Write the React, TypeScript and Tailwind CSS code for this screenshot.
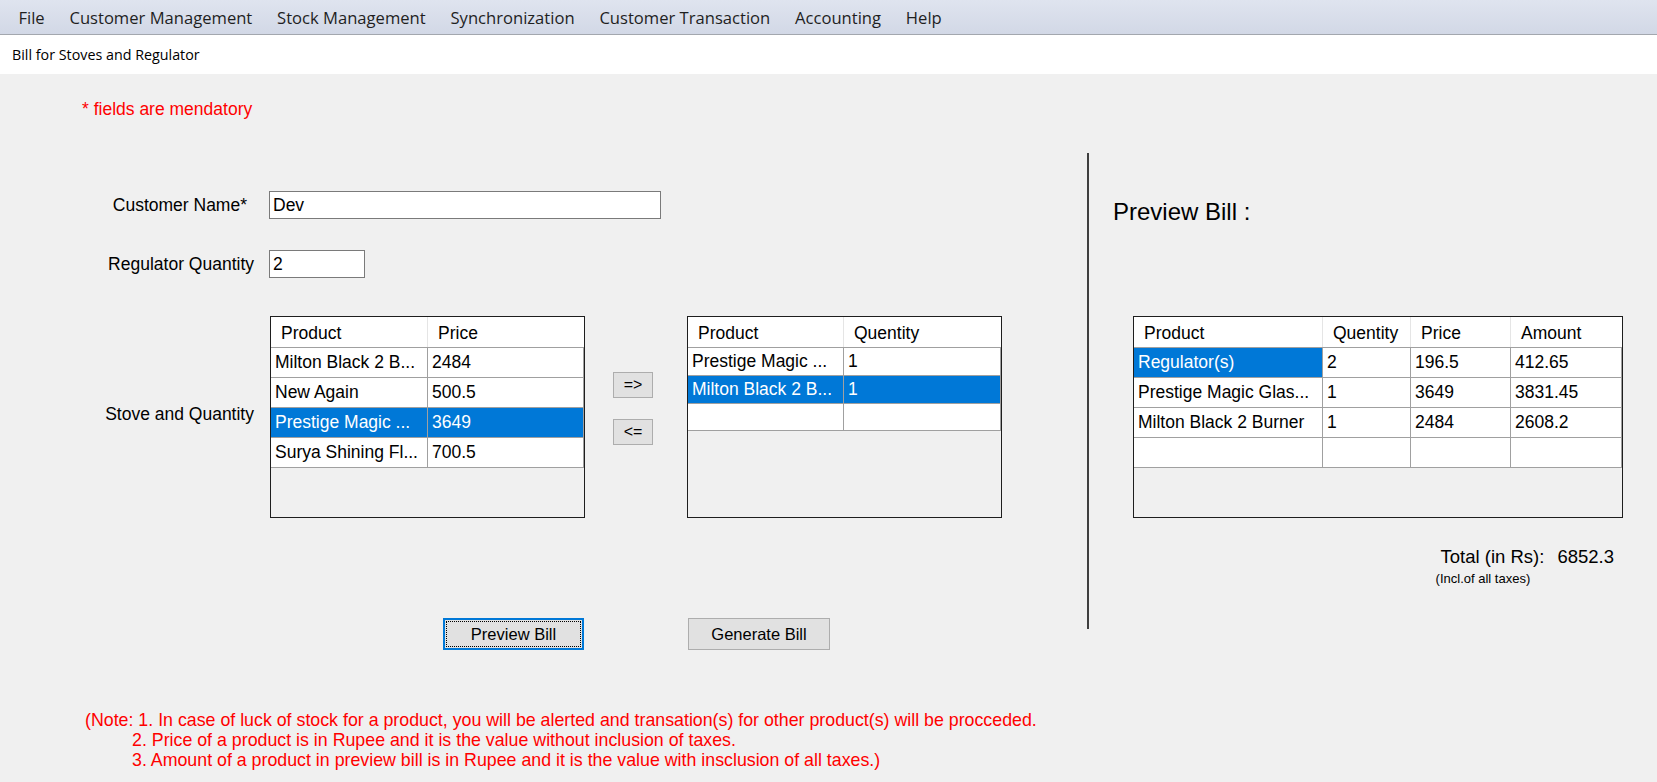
import React from 'react';

type Col = { label: string; w: string };
type Cell = { text: string; sel?: boolean };

const menus = ['File', 'Customer Management', 'Stock Management', 'Synchronization', 'Customer Transaction', 'Accounting', 'Help'];

function DataGrid({ cols, rows, rowH, width }: { cols: Col[]; rows: Cell[][]; rowH: string[]; width: string }) {
  return (
    <div className={`${width} h-[202px] border border-[#1e1e1e] bg-[#f0f0f0] flex flex-col shrink-0`}>
      <div className="flex h-[31px] bg-white border-b border-[#a0a0a0]">
        {cols.map((c, i) => (
          <div key={i} className={`${c.w} h-full pl-[10px] pt-[2px] flex items-center border-r border-[#e5e5e5] last:border-r-0`}>
            {c.label}
          </div>
        ))}
      </div>
      {rows.map((r, ri) => (
        <div key={ri} className={`flex ${rowH[ri]} border-b border-[#a0a0a0]`}>
          {r.map((cell, ci) => (
            <div
              key={ci}
              className={`${cols[ci].w} h-full pl-[4px] pr-[2px] flex items-center whitespace-nowrap overflow-hidden border-r border-[#a0a0a0] ${
                cell.sel ? 'bg-[#0078d7] text-white' : 'bg-white'
              }`}
            >
              {cell.text}
            </div>
          ))}
        </div>
      ))}
    </div>
  );
}

export default function App() {
  const stockCols: Col[] = [
    { label: 'Product', w: 'w-[157px]' },
    { label: 'Price', w: 'w-[156px]' },
  ];
  const stockRows: Cell[][] = [
    [{ text: 'Milton Black 2 B...' }, { text: '2484' }],
    [{ text: 'New Again' }, { text: '500.5' }],
    [{ text: 'Prestige Magic ...', sel: true }, { text: '3649', sel: true }],
    [{ text: 'Surya Shining Fl...' }, { text: '700.5' }],
  ];
  const cartCols: Col[] = [
    { label: 'Product', w: 'w-[156px]' },
    { label: 'Quentity', w: 'w-[157px]' },
  ];
  const cartRows: Cell[][] = [
    [{ text: 'Prestige Magic ...' }, { text: '1' }],
    [{ text: 'Milton Black 2 B...', sel: true }, { text: '1', sel: true }],
    [{ text: '' }, { text: '' }],
  ];
  const billCols: Col[] = [
    { label: 'Product', w: 'w-[189px]' },
    { label: 'Quentity', w: 'w-[88px]' },
    { label: 'Price', w: 'w-[100px]' },
    { label: 'Amount', w: 'w-[111px]' },
  ];
  const billRows: Cell[][] = [
    [{ text: 'Regulator(s)', sel: true }, { text: '2' }, { text: '196.5' }, { text: '412.65' }],
    [{ text: 'Prestige Magic Glas...' }, { text: '1' }, { text: '3649' }, { text: '3831.45' }],
    [{ text: 'Milton Black 2 Burner' }, { text: '1' }, { text: '2484' }, { text: '2608.2' }],
    [{ text: '' }, { text: '' }, { text: '' }, { text: '' }],
  ];

  return (
    <div className="h-[782px] w-full overflow-hidden bg-[#f0f0f0] text-black font-['Liberation_Sans',Arial,sans-serif] text-[17.5px]">
      {/* menu */}
      <div className="h-[35px] pt-[2px] flex items-center pl-[6px] bg-gradient-to-b from-[#dfe4ef] to-[#d2d8e6] border-b border-[#a3a7ae] font-['Open_Sans',sans-serif] text-[16.6px] text-[#1f1f1f]">
        {menus.map((m) => (
          <div key={m} className="px-[12.4px]">{m}</div>
        ))}
      </div>
      <div className="h-[39px] bg-white flex items-center pl-[12px] font-['Open_Sans',sans-serif] text-[14.3px]">
        Bill for Stoves and Regulator
      </div>

      <div className="pt-[25px] pl-[82px] h-[20px] leading-[20px] text-[#ff0000] box-content">* fields are mendatory</div>

      <div className="flex mt-[34px]">
        {/* left side */}
        <div className="w-[1087px] shrink-0 flex flex-col">
          <div className="flex items-center mt-[38px]">
            <div className="w-[247px] text-right">Customer Name*</div>
            <div className="ml-[22px] w-[392px] h-[28px] bg-white border border-[#7a7a7a] flex items-center pl-[3px]">Dev</div>
          </div>
          <div className="flex items-center mt-[31px]">
            <div className="w-[254px] text-right">Regulator Quantity</div>
            <div className="ml-[15px] w-[96px] h-[28px] bg-white border border-[#7a7a7a] flex items-center pl-[3px]">2</div>
          </div>
          <div className="flex items-center mt-[38px]">
            <div className="w-[254px] text-right mt-[-6px]">Stove and Quantity</div>
            <div className="ml-[16px]">
              <DataGrid width="w-[315px]" cols={stockCols} rows={stockRows} rowH={['h-[30px]', 'h-[30px]', 'h-[30px]', 'h-[30px]']} />
            </div>
            <div className="ml-[28px] flex flex-col gap-[21px] -mt-[18px] text-[16px]">
              <button className="w-[40px] h-[26px] bg-[#e1e1e1] border border-[#adadad] flex items-center justify-center">=&gt;</button>
              <button className="w-[40px] h-[26px] bg-[#e1e1e1] border border-[#adadad] flex items-center justify-center">&lt;=</button>
            </div>
            <div className="ml-[34px]">
              <DataGrid width="w-[315px]" cols={cartCols} rows={cartRows} rowH={['h-[28px]', 'h-[28px]', 'h-[27px]']} />
            </div>
          </div>
          <div className="flex mt-[100px] pl-[443px] gap-[104px] text-[16.5px]">
            <button className="w-[141px] h-[32px] bg-[#e1e1e1] border-2 border-[#0078d7] p-px">
              <div className="h-full w-full border border-dotted border-black flex items-center justify-center">Preview Bill</div>
            </button>
            <button className="w-[142px] h-[32px] bg-[#e1e1e1] border border-[#adadad] flex items-center justify-center">Generate Bill</button>
          </div>
        </div>

        {/* divider */}
        <div className="w-[2px] h-[476px] bg-[#3f3f3f] shrink-0" />

        {/* right side */}
        <div className="flex flex-col pt-[46px]">
          <div className="pl-[24px] text-[24px] leading-[26px]">Preview Bill :</div>
          <div className="pl-[44px] mt-[91px]">
            <DataGrid width="w-[490px]" cols={billCols} rows={billRows} rowH={['h-[30px]', 'h-[30px]', 'h-[30px]', 'h-[30px]']} />
          </div>
          <div className="flex justify-end w-[534px] mt-[29px]">
            <div className="flex flex-col">
              <div className="flex leading-[20px] text-[18.5px]">
                <span>Total (in Rs):</span>
                <span className="ml-[13px] mr-[9px]">6852.3</span>
              </div>
              <div className="-ml-[5px] mt-[5px] text-[13px] leading-[14px]">(Incl.of all taxes)</div>
            </div>
          </div>
        </div>
      </div>

      <div className="mt-[60px] text-[#ff0000] text-[17.8px] leading-[20px]">
        <div className="pl-[85px]">(Note: 1. In case of luck of stock for a product, you will be alerted and transation(s) for other product(s) will be procceded.</div>
        <div className="pl-[132px]">2. Price of a product is in Rupee and it is the value without inclusion of taxes.</div>
        <div className="pl-[132px]">3. Amount of a product in preview bill is in Rupee and it is the value with insclusion of all taxes.)</div>
      </div>
    </div>
  );
}
